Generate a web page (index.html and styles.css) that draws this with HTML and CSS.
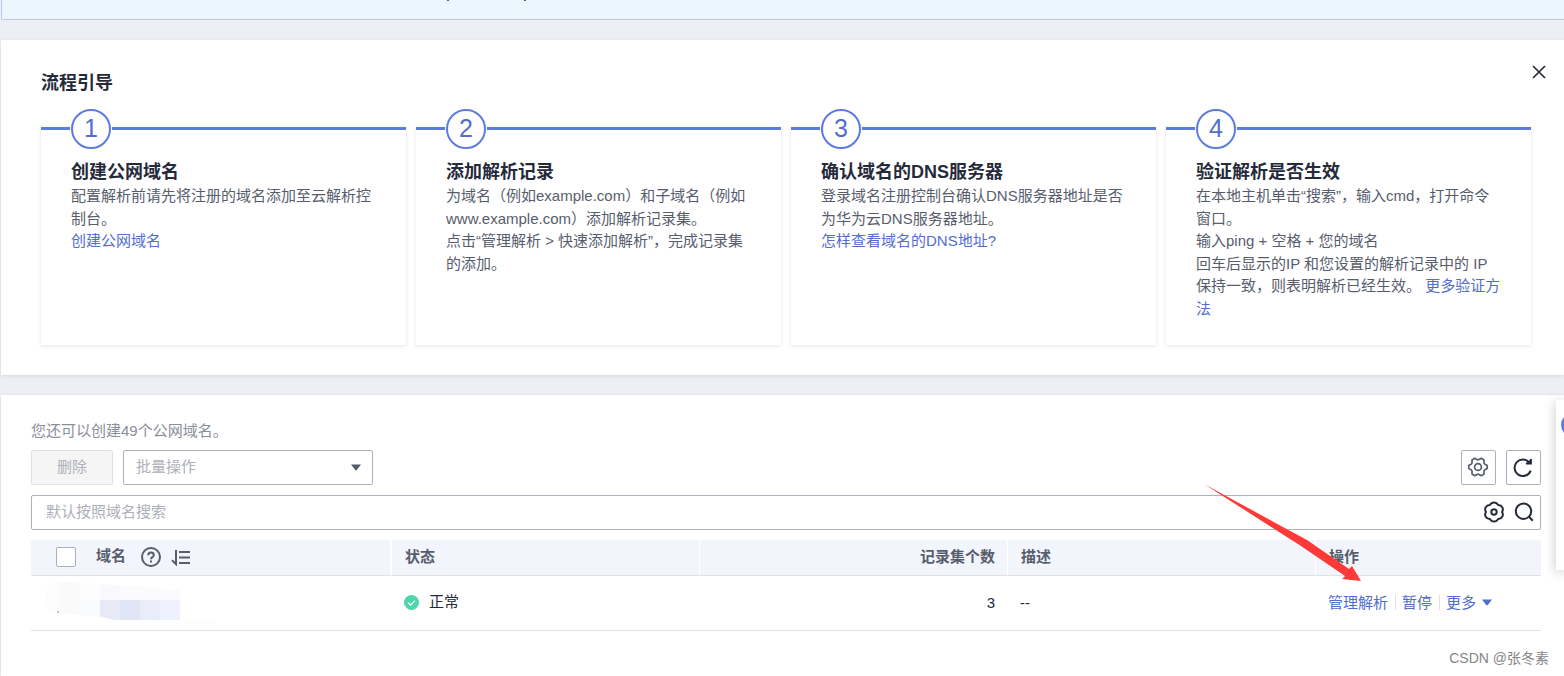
FILE: index.html
```html
<!DOCTYPE html>
<html lang="zh-CN">
<head>
<meta charset="utf-8">
<title>公网域名</title>
<link rel="stylesheet" href="styles.css">
</head>
<body>
<div class="page">
  <div class="banner">
    <svg class="banner-marks" width="80" height="1" aria-hidden="true"><path d="M0 .5h2M77 .5h2" stroke="#575d6c"/></svg>
  </div>

  <section class="panel guide">
    <header class="guide-head">
      <h2 class="heading">流程引导</h2>
      <button class="close" type="button" aria-label="关闭">
        <svg width="14" height="14" viewBox="0 0 14 14"><path d="M1 1l12 12M13 1L1 13" stroke="#252b3a" stroke-width="1.7" fill="none"/></svg>
      </button>
    </header>
    <div class="steps">
      <article class="step">
        <span class="step-number">1</span>
        <h3 class="heading">创建公网域名</h3>
        <p>配置解析前请先将注册的域名添加至云解析控制台。</p>
        <p><a href="#">创建公网域名</a></p>
      </article>
      <article class="step">
        <span class="step-number">2</span>
        <h3 class="heading">添加解析记录</h3>
        <p>为域名（例如example.com）和子域名（例如www.example.com）添加解析记录集。</p>
        <p>点击“管理解析 &gt; 快速添加解析”，完成记录集的添加。</p>
      </article>
      <article class="step">
        <span class="step-number">3</span>
        <h3 class="heading">确认域名的DNS服务器</h3>
        <p>登录域名注册控制台确认DNS服务器地址是否为华为云DNS服务器地址。</p>
        <p><a href="#">怎样查看域名的DNS地址?</a></p>
      </article>
      <article class="step">
        <span class="step-number">4</span>
        <h3 class="heading">验证解析是否生效</h3>
        <p>在本地主机单击“搜索”，输入cmd，打开命令窗口。</p>
        <p>输入ping + 空格 + 您的域名</p>
        <p>回车后显示的IP 和您设置的解析记录中的 IP 保持一致，则表明解析已经生效。 <a href="#">更多验证方法</a></p>
      </article>
    </div>
  </section>

  <section class="panel domains">
    <p class="quota">您还可以创建49个公网域名。</p>
    <div class="toolbar">
      <button class="delete" type="button" disabled>删除</button>
      <div class="select-box">
        <select class="batch" aria-label="批量操作"><option>批量操作</option></select>
        <svg class="caret" width="10" height="7" viewBox="0 0 10 7" aria-hidden="true"><path d="M0 .5h10L6 5.700q-1 1-2 0z" fill="#575d6c"/></svg>
      </div>
      <div class="tools">
        <button class="tool" type="button" aria-label="设置">
          <svg width="22" height="22" viewBox="0 0 22 22" fill="none" stroke="#575d6c" stroke-width="1.700" stroke-linejoin="round"><path d="M17.950 8.200L20.200 9.400V12.600L17.950 13.800Q17 14.300 16.900 15.600L17 18.100L14.200 19.700L12 18.400Q11 17.800 10 18.400L7.800 19.700L5 18.100L5.100 15.600Q5 14.300 4.050 13.800L1.800 12.600V9.400L4.050 8.200Q5 7.700 5.100 6.400L5 3.900L7.800 2.300L10 3.600Q11 4.200 12 3.600L14.200 2.300L17 3.900L16.900 6.400Q17 7.700 17.950 8.200z"/><circle cx="11" cy="11" r="3.400"/></svg>
        </button>
        <button class="tool" type="button" aria-label="刷新">
          <svg width="22" height="22" viewBox="0 0 22 22" fill="none" stroke="#252b3a" stroke-width="2"><path d="M18.700 14.600A8.300 8.300 0 1 1 17.600 6.800"/><path d="M18.900 3v4.500h-5"/><path d="M14 7.500h4.900V3z" fill="#252b3a" stroke="none"/></svg>
        </button>
      </div>
    </div>
    <div class="search">
      <input class="search-input" type="text" placeholder="默认按照域名搜索" aria-label="默认按照域名搜索">
      <button class="icon-button" type="button" aria-label="搜索设置">
        <svg width="22" height="22" viewBox="0 0 22 22" fill="none" stroke="#252b3a" stroke-width="2" stroke-linejoin="round"><path d="M19 11A4.500 4.500 0 0 1 15 18.100A4.500 4.500 0 0 1 7 18.100A4.500 4.500 0 0 1 3 11A4.500 4.500 0 0 1 7 3.900A4.500 4.500 0 0 1 15 3.900A4.500 4.500 0 0 1 19 11z"/><circle cx="11" cy="11" r="2.700"/></svg>
      </button>
      <button class="icon-button" type="button" aria-label="搜索">
        <svg width="22" height="22" viewBox="0 0 22 22" fill="none" stroke="#252b3a" stroke-width="2"><circle cx="10.500" cy="10.200" r="7.700"/><path d="M15.800 15.500l4 4.200"/></svg>
      </button>
    </div>

    <table class="table">
      <colgroup><col class="col-name"><col><col><col><col class="col-actions"></colgroup>
      <thead>
        <tr>
          <th class="name-head">
            <div class="name-label">
              <input class="check" type="checkbox" aria-label="全选">
              <span>域名</span>
              <svg class="help" width="20" height="20" viewBox="0 0 20 20" fill="none" stroke="#575d6c" stroke-width="2"><circle cx="10" cy="10" r="9"/><path d="M7.200 8.300Q7.300 5.500 10 5.500T12.800 8Q12.800 9.200 11.400 10.100Q10 11 10 12.300"/><path d="M10 13.600v2"/></svg>
              <svg width="20" height="18" viewBox="0 0 20 18" fill="none" stroke="#575d6c" stroke-width="2"><path d="M5 2v14.200L1 12.300"/><path d="M8 4h11M8 9.500h11M8 15h11"/></svg>
            </div>
          </th>
          <th>状态</th>
          <th class="count">记录集个数</th>
          <th>描述</th>
          <th>操作</th>
        </tr>
      </thead>
      <tbody>
        <tr>
          <td class="name-cell">
            <svg class="mosaic" width="175" height="46" viewBox="45 580 175 46" aria-label="域名已隐藏" role="img">
              <clipPath id="blur-area"><path d="M60 581L180 590V620Q217 620 217 621Q214 625 190 625Q165 624 148 620H115L102 617L61 613Q45 609 45 597T60 581z"/></clipPath>
              <g clip-path="url(#blur-area)">
                <path d="M45 580h175v46H45z" fill="#fdfdfd"/>
                <path d="M45 580h15v40H45z" fill="#fcfcfc"/>
                <path d="M60 580h20v40H60z" fill="#fafafa"/>
                <path d="M80 600h20v20H80z" fill="#fafbfd"/>
                <path d="M100 580h20v20h-20z" fill="#f8f9fd"/>
                <path d="M120 580h60v20h-60z" fill="#fbfbfe"/>
                <path d="M100 600h20v20h-20z" fill="#e8e9f6"/>
                <path d="M120 600h20v20h-20z" fill="#e0e6f5"/>
                <path d="M140 600h20v20h-20z" fill="#eaedf7"/>
                <path d="M160 600h20v20h-20z" fill="#eff2fc"/>
              </g>
              <path d="M57 612h2" stroke="#8a8e99"/>
            </svg>
          </td>
          <td>
            <div class="status">
              <svg width="15" height="15" viewBox="0 0 15 15"><circle cx="7.500" cy="7.500" r="7.500" fill="#50d4ab"/><path d="M4 7.600l2.600 2.500L11 5.600" fill="none" stroke="#fff" stroke-width="1.200"/></svg>
              <span>正常</span>
            </div>
          </td>
          <td class="count">3</td>
          <td>--</td>
          <td>
            <div class="actions">
              <a href="#">管理解析</a>
              <a href="#">暂停</a>
              <a class="more" href="#">更多<svg width="10" height="7" viewBox="0 0 10 7" aria-hidden="true"><path d="M0 .5h10L6 5.700q-1 1-2 0z" fill="#526ecc"/></svg></a>
            </div>
          </td>
        </tr>
      </tbody>
    </table>
  </section>

  <aside class="dock"><span class="dock-dot"></span></aside>
  <svg class="pointer" width="158" height="98" viewBox="0 0 158 98" aria-hidden="true"><path d="M0 0L103 56L145 85L148 82L157 97L138 95L141 92L97 62z" fill="#fd3a37"/></svg>
  <span class="watermark">CSDN @张冬素</span>
</div>
</body>
</html>
```
FILE: styles.css
```css
* {
  box-sizing: border-box;
}

body {
  margin: 0;
  background: #eeeff4;
  color: #252b3a;
  font: 15px/1.5 "Liberation Sans", "Noto Sans CJK SC", sans-serif;
}

h2, h3, p {
  margin: 0;
}

a {
  color: #526ecc;
  text-decoration: none;
}

button, input, select {
  font: inherit;
  color: inherit;
}

svg {
  display: block;
  flex: none;
}

.page {
  position: relative;
  display: flex;
  flex-direction: column;
  gap: 20px;
  min-height: 100vh;
  padding-left: 1px;
  overflow: hidden;
}

.banner {
  height: 20px;
  padding-left: 445px;
  background: #ebf6ff;
  border: solid #bcc8f3;
  border-width: 0 0 1px 1px;
  border-radius: 0 0 0 2px;
}

.panel {
  background: #fff;
  box-shadow: 0 1px 4px rgba(37, 43, 58, 0.12);
}

.heading {
  font-size: 18px;
  line-height: 26px;
  font-weight: 700;
}

.guide {
  padding: 25px 33px 30px 40px;
}

.guide-head {
  display: flex;
  justify-content: space-between;
  align-items: flex-start;
  margin-right: -15px;
  height: 62px;
}

.guide-head .heading {
  padding-top: 5px;
}

.close {
  padding: 0;
  border: 0;
  background: none;
}

.steps {
  display: grid;
  grid-template-columns: repeat(4, 1fr);
  gap: 10px;
}

.step {
  min-height: 218px;
  padding: 0 30px 25px;
  border-top: 3px solid #5e7ce0;
  box-shadow: 0 1px 4px rgba(37, 43, 58, 0.12);
  color: #575d6c;
}

.step .heading {
  color: #252b3a;
}

.step-number {
  display: flex;
  align-items: center;
  justify-content: center;
  width: 40px;
  height: 40px;
  margin: -21px 0 10px;
  border: 2px solid #5e7ce0;
  border-radius: 50%;
  background: #fff;
  box-shadow: 0 0 0 1px #fff;
  color: #526ecc;
  font-size: 25px;
}

.domains {
  flex: 1;
  padding: 25px 23px 45px 30px;
}

.quota {
  height: 30px;
  color: #8a8e99;
}

.toolbar {
  display: flex;
  gap: 10px;
  margin-bottom: 10px;
}

.delete {
  width: 82px;
  height: 35px;
  border: 1px solid #dfe1e6;
  border-radius: 2px;
  background: #f5f5f6;
  color: #adb0b8;
}

.select-box {
  position: relative;
  width: 250px;
}

.batch {
  appearance: none;
  width: 100%;
  height: 35px;
  padding: 0 12px;
  border: 1px solid #adb0b8;
  border-radius: 2px;
  background: #fff;
  color: #adb0b8;
}

.caret {
  position: absolute;
  right: 12px;
  top: 14px;
  pointer-events: none;
}

.tools {
  display: flex;
  gap: 10px;
  margin-left: auto;
}

.tool {
  display: grid;
  place-items: center;
  width: 35px;
  height: 35px;
  padding: 0 1px 1px 0;
  border: 1px solid #adb0b8;
  border-radius: 2px;
  background: #fff;
}

.search {
  display: flex;
  align-items: center;
  gap: 8px;
  height: 35px;
  margin-bottom: 10px;
  padding: 0 5px 0 14px;
  border: 1px solid #adb0b8;
  border-radius: 2px;
}

.search-input {
  flex: 1;
  min-width: 0;
  padding: 0;
  border: 0;
  outline: 0;
  background: none;
}

.search-input::placeholder {
  color: #adb0b8;
}

.icon-button {
  padding: 0 0 2px;
  border: 0;
  background: none;
}

.table {
  width: 100%;
  table-layout: fixed;
  border-collapse: separate;
  border-spacing: 0;
}

.col-name {
  width: 360px;
}

.col-actions {
  width: 226px;
}

th, td {
  padding: 0 12px 0 13px;
  border-bottom: 1px solid #dfe1e6;
  text-align: left;
}

th {
  height: 36px;
  background: #f2f5fc;
  color: #575d6c;
}

th + th {
  border-left: 1px solid #fff;
}

td {
  height: 55px;
}

.name-head {
  padding-left: 25px;
  border-right: 1px solid #fff;
}

.name-label {
  display: flex;
  align-items: center;
  padding-bottom: 2px;
}

.check {
  appearance: none;
  width: 20px;
  height: 20px;
  margin: 0 20px 0 0;
  border: 1px solid #adb0b8;
  border-radius: 2px;
  background: #fff;
}

.help {
  margin: 0 10px 0 15px;
}

.name-cell {
  padding-left: 14px;
}

.count {
  text-align: right;
}

.status {
  display: flex;
  align-items: center;
  gap: 10px;
  padding-bottom: 2px;
}

.actions {
  display: flex;
  align-items: center;
  padding-bottom: 2px;
}

.actions a {
  line-height: 15px;
}

.actions a + a {
  margin-left: 7px;
  padding-left: 6px;
  border-left: 1px solid #dfe1e6;
}

.more {
  display: flex;
  align-items: center;
  gap: 6px;
}

.dock {
  position: absolute;
  top: 400px;
  right: 0;
  width: 8px;
  height: 170px;
  background: #fff;
  box-shadow: 0 2px 12px rgba(0, 0, 0, 0.25);
}

.dock-dot {
  position: absolute;
  top: 13px;
  left: 5px;
  width: 24px;
  height: 24px;
  border-radius: 50%;
  background: #5e7ce0;
}

.pointer {
  position: absolute;
  top: 484px;
  right: 202px;
  pointer-events: none;
}

.watermark {
  position: absolute;
  top: 648px;
  right: 15px;
  color: #85868a;
  font-size: 14px;
}
```
